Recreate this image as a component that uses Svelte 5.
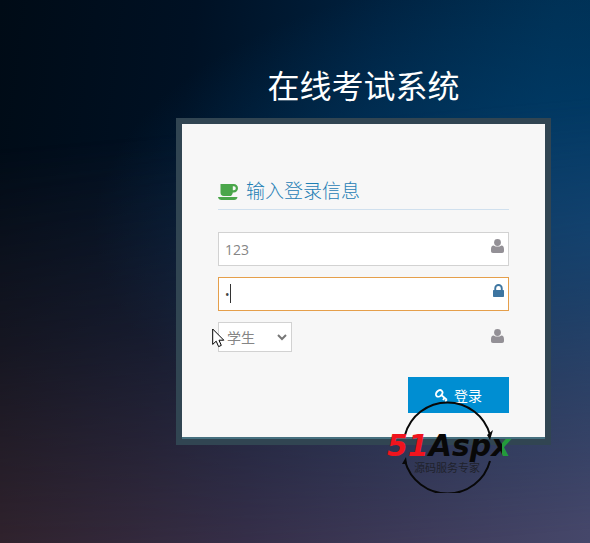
<script lang="ts">
	let username = $state('123');
	let password = $state('1');
	let role = $state('student');

	const roles = [
		{ value: 'student', label: '学生' },
		{ value: 'teacher', label: '教师' },
		{ value: 'admin', label: '管理员' }
	];

	function login(event: SubmitEvent) {
		event.preventDefault();
	}
</script>

{#snippet userIcon()}
	<svg class="field-icon" width="13" height="14" viewBox="0 0 13 14" aria-hidden="true">
		<circle cx="6.5" cy="3.5" r="3.4" />
		<path d="M2.6 6.4C.8 6.4 0 8 0 10.4V12.2Q0 14 1.9 14H11.1Q13 14 13 12.2V10.4C13 8 12.2 6.4 10.4 6.4Q8.6 7.6 6.5 7.6T2.6 6.4Z" />
	</svg>
{/snippet}

<main class="page">
	<h1>在线考试系统</h1>

	<div class="login-frame">
		<form class="login-box" onsubmit={login}>
			<h2>
				<svg width="20" height="16" viewBox="0 0 20 16" aria-hidden="true">
					<path fill-rule="evenodd" d="M2.5 0H15.8A4.2 4.2 0 0 1 15.8 8.4H14.8Q14.4 12 11.4 12H5.8Q2.5 12 2.5 8.6ZM14.8 2.2V6.2H15.8A2 2 0 0 0 15.8 2.2Z" />
					<path d="M0 13H19.5Q19 16 16 16H3.5Q.5 16 0 13Z" />
				</svg>
				输入登录信息
			</h2>

			<div class="field">
				<input type="text" aria-label="用户名" autocomplete="off" bind:value={username} />
				{@render userIcon()}
			</div>

			<div class="field">
				<input class="active" type="password" aria-label="密码" autocomplete="off" bind:value={password} />
				<span class="caret"></span>
				<svg class="field-icon lock" width="11" height="13" viewBox="0 0 11 13" aria-hidden="true">
					<path fill-rule="evenodd" d="M1.3 6V4.2a4.2 4.2 0 0 1 8.4 0V6H10.3Q11 6 11 6.8V12.2Q11 13 10.2 13H.8Q0 13 0 12.2V6.8Q0 6 .7 6ZM3.2 6H7.8V4.2a2.3 2.3 0 0 0-4.6 0Z" />
				</svg>
			</div>

			<div class="field">
				<select aria-label="身份" bind:value={role}>
					{#each roles as item}
						<option value={item.value}>{item.label}</option>
					{/each}
				</select>
				<svg class="chevron" width="10" height="7" viewBox="0 0 10 7" aria-hidden="true">
					<path d="M1 1L5 5L9 1" />
				</svg>
				{@render userIcon()}
				<svg class="pointer" width="13" height="20" viewBox="0 0 13 20" aria-hidden="true">
					<path d="M.7 1V16.4L4.2 13.2L6.6 18.6L9.3 17.4L7 12.2H11.8Z" />
				</svg>
			</div>

			<div class="actions">
				<button type="submit">
					<svg width="13" height="13" viewBox="0 0 13 13" aria-hidden="true">
						<ellipse cx="4.2" cy="4.4" rx="3.7" ry="2.7" transform="rotate(-45 4.2 4.4)" />
						<path d="M6.2 6L11.8 10.6M8 11L9.6 8.9M10.2 12.6L11.8 10.4" />
					</svg>
					登录
				</button>
			</div>
		</form>

		<svg class="brand" width="130" height="92" viewBox="0 0 130 92" role="img" aria-label="51Aspx 源码服务专家">
			<defs>
				<linearGradient id="brand-x" x1="0" x2="1">
					<stop offset="92%" stop-color="#080808" />
					<stop offset="92%" stop-color="#239a3b" />
				</linearGradient>
			</defs>
			<path class="ring" d="M19 34A44 44 0 0 1 104 34M19 60A44 44 0 0 0 104 60" />
			<path d="M101 34L107 29L104 39ZM16 63L20 56L21 63Z" />
			<text class="name" x="1" y="55"><tspan class="red">51</tspan><tspan fill="url(#brand-x)">Aspx</tspan></text>
			<text class="slogan" x="28" y="71">源码服务专家</text>
		</svg>
	</div>
</main>

<style>
	:global(body) {
		margin: 0;
	}

	.page {
		position: relative;
		isolation: isolate;
		box-sizing: border-box;
		min-height: 100vh;
		padding: 62px 39px 48px 176px;
		font-family: 'Open Sans', 'Noto Sans CJK SC', sans-serif;
		font-size: 14px;
		background:
			radial-gradient(ellipse at 105% 42%, #004070, transparent 60%),
			linear-gradient(97deg, #000b16 0%, #001124 30%, #00213f 58%, #002f52 85%, #003054 100%);
	}

	/* dusk glow that fades in towards the bottom */
	.page::before {
		content: '';
		position: absolute;
		inset: 0;
		z-index: -1;
		background: linear-gradient(90deg, #35252f 0%, #38304a 42%, #45476a 100%);
		mask-image: linear-gradient(175deg, transparent 25%, rgba(0, 0, 0, 0.4) 58%, #000 98%);
	}

	h1 {
		margin: 0 0 8px;
		font-size: 32px;
		font-weight: 400;
		line-height: 48px;
		text-align: center;
		color: #fff;
	}

	.login-frame {
		position: relative;
		padding: 6px;
		background: #314552;
	}

	.login-box {
		padding: 54px 36px 24px;
		background: #f7f7f7;
		border-bottom: 2px solid #46707f;
	}

	h2 {
		display: flex;
		align-items: center;
		gap: 8px;
		margin: 0 0 22px;
		padding-bottom: 4px;
		border-bottom: 1px solid #d0e0ee;
		font-size: 19px;
		font-weight: 300;
		line-height: 27px;
		color: #1f80b5;
	}

	h2 svg {
		fill: #4aa64a;
	}

	.field {
		position: relative;
		margin-bottom: 11px;
	}

	input,
	select {
		box-sizing: border-box;
		display: block;
		border: 1px solid #d2d2d2;
		border-radius: 0;
		background: #fff;
		color: #858585;
		font: inherit;
		outline: none;
	}

	input {
		width: 100%;
		height: 34px;
		padding: 0 24px 0 6px;
	}

	input.active {
		border-color: #e59f4b;
		color: #444;
		font-size: 12px;
	}

	select {
		width: 74px;
		height: 30px;
		padding: 0 20px 0 8px;
		appearance: none;
	}

	.field-icon {
		position: absolute;
		top: 7px;
		right: 5px;
		fill: #939096;
	}

	.field-icon.lock {
		fill: #3d75a0;
	}

	.caret {
		position: absolute;
		top: 7px;
		left: 12px;
		width: 1px;
		height: 19px;
		background: #333;
	}

	.chevron {
		position: absolute;
		top: 12px;
		left: 59px;
		fill: none;
		stroke: #777;
		stroke-width: 2;
	}

	.pointer {
		position: absolute;
		top: 6px;
		left: -6px;
		fill: #fff;
		stroke: #000;
	}

	.actions {
		display: flex;
		justify-content: flex-end;
		padding-top: 14px;
	}

	button {
		display: flex;
		align-items: center;
		justify-content: center;
		gap: 6px;
		width: 101px;
		height: 36px;
		padding: 0;
		border: 0;
		background: #008ed2;
		color: #fff;
		font: inherit;
	}

	button svg {
		fill: none;
		stroke: #fff;
		stroke-width: 1.8;
	}

	.brand {
		position: absolute;
		right: 35px;
		bottom: -48px;
		fill: #080808;
	}

	.ring {
		fill: none;
		stroke: #080808;
		stroke-width: 2;
	}

	.name {
		font-family: 'DejaVu Sans', sans-serif;
		font-size: 30px;
		font-style: italic;
		font-weight: 700;
	}

	.red {
		fill: #f0141e;
	}

	.slogan {
		font-family: 'Noto Sans CJK SC', sans-serif;
		font-size: 11px;
		fill: #20222c;
	}
</style>
